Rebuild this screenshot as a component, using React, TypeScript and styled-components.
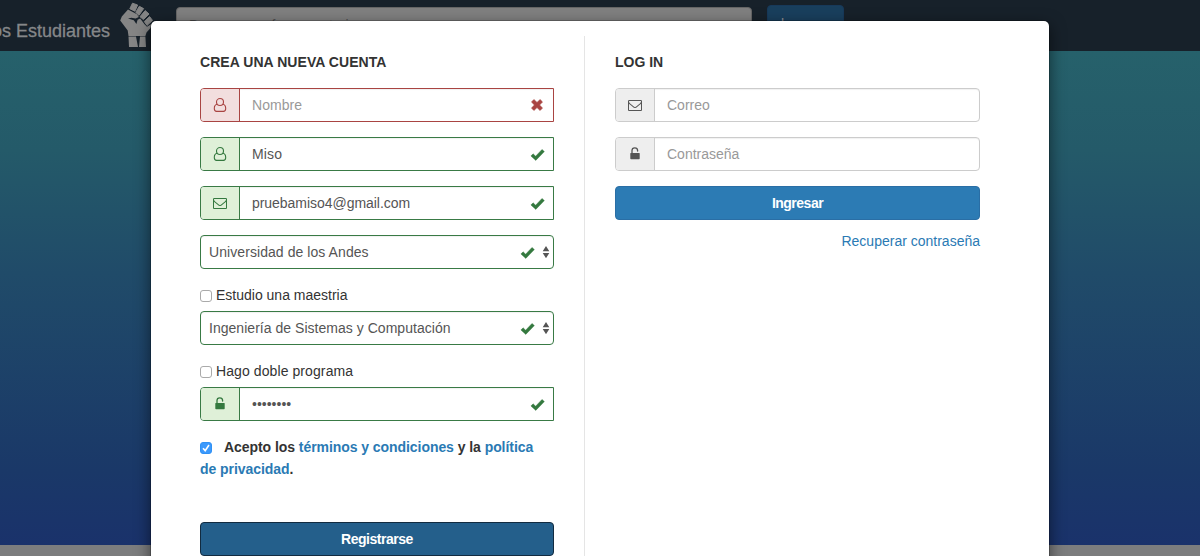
import React from 'react';
import styled, { createGlobalStyle } from 'styled-components';

const GlobalStyle = createGlobalStyle`
  * { box-sizing: border-box; }
  body {
    margin: 0;
    overflow: hidden;
    font-family: 'Liberation Sans', Helvetica, Arial, sans-serif;
    font-size: 14px;
    line-height: 20px;
    color: #333;
  }
`;

type Tone = 'error' | 'success' | 'plain';
const tones: Record<Tone, { line: string; fill: string; ink: string }> = {
  error: { line: '#a94442', fill: '#f2dede', ink: '#a94442' },
  success: { line: '#397a45', fill: '#dff0d8', ink: '#34793f' },
  plain: { line: '#ccc', fill: '#eee', ink: '#555' },
};

const Page = styled.div`
  position: relative;
  height: 556px;
  display: flex;
  flex-direction: column;
  overflow: hidden;
`;
const Navbar = styled.header`
  height: 51px;
  flex: none;
  display: flex;
  align-items: flex-start;
  background: #17212a;
`;
const Brand = styled.div`
  width: 110px;
  height: 51px;
  padding-top: 20px;
  display: flex;
  justify-content: flex-end;
  white-space: nowrap;
  font-size: 18px;
  line-height: 22px;
  color: #858789;
  -webkit-text-stroke: 0.3px #858789;
`;
const Fist = styled.svg`
  width: 34px;
  height: 46px;
  margin: 2px 0 0 9px;
`;
const Search = styled.div`
  width: 576px;
  height: 34px;
  margin: 7px 0 0 23px;
  padding: 7px 12px;
  border: 1px solid #666;
  border-radius: 4px;
  background: #808080;
  color: #505050;
`;
const SearchButton = styled.div`
  width: 77px;
  height: 34px;
  margin: 5px 0 0 15px;
  padding: 8px 13px;
  border-radius: 4px;
  border: 1px solid #17395a;
  background: #193f5d;
  color: #909090;
`;
const Hero = styled.main`
  flex: 1;
  background: linear-gradient(#26616b, #245a69 20%, #204b69 45%, #1a3868 85%, #1a326b);
`;
const Footer = styled.footer`
  height: 11px;
  flex: none;
  background: #7c7d7e;
`;
const Modal = styled.section`
  position: absolute;
  top: 20px;
  left: 150px;
  width: 900px;
  height: 700px;
  padding: 15px 49px 0;
  display: flex;
  background: #fff;
  background-clip: padding-box;
  border: 1px solid rgba(0, 0, 0, 0.2);
  border-radius: 6px;
  box-shadow: 0 5px 15px rgba(0, 0, 0, 0.5);
`;
const SignUp = styled.div`
  width: 385px;
  padding-right: 30px;
  border-right: 1px solid #e5e5e5;
`;
const LogIn = styled.div`
  width: 395px;
  padding-left: 30px;
`;
const Title = styled.h4`
  margin: 16px 0;
  font-size: 14px;
  line-height: 20px;
  white-space: nowrap;
`;
const Field = styled.div<{ $tone: Tone; $flat?: boolean }>`
  height: 34px;
  margin-bottom: 15px;
  display: flex;
  border: 1px solid ${(p) => tones[p.$tone].line};
  border-radius: ${(p) => (p.$flat ? '4px 0 0 4px' : '4px')};
  box-shadow: inset 0 1px 1px rgba(0, 0, 0, 0.06);
  color: ${(p) => tones[p.$tone].ink};
  overflow: hidden;
`;
const Addon = styled.div<{ $tone: Tone }>`
  width: 39px;
  display: flex;
  align-items: center;
  justify-content: center;
  border-right: 1px solid ${(p) => tones[p.$tone].line};
  background: ${(p) => tones[p.$tone].fill};
`;
const Value = styled.div<{ $hint?: boolean }>`
  flex: 1;
  padding: 6px 12px;
  color: ${(p) => (p.$hint ? '#999' : '#555')};
`;
const Status = styled.div`
  width: 32px;
  display: flex;
  align-items: center;
  justify-content: center;
`;
const Select = styled(Field)`
  margin-bottom: 16px;
  ${Value} { padding-left: 8px; }
  ${Status} { width: 29px; }
`;
const Arrows = styled.svg`
  width: 8px;
  height: 12px;
  margin: 10px 3px 0 0;
`;
const CheckRow = styled.div`
  height: 20px;
  margin-bottom: 6px;
  display: flex;
  align-items: center;
  gap: 4px;
`;
const Box = styled.span<{ $on?: boolean }>`
  width: 12px;
  height: 12px;
  flex: none;
  display: inline-flex;
  margin-top: 2px;
  border: 1px solid ${(p) => (p.$on ? '#2f91f5' : '#aaa')};
  border-radius: 3px;
  background: ${(p) => (p.$on ? '#3b99fc' : '#fff')};
  svg { width: 10px; height: 10px; }
`;
const Terms = styled.p`
  margin: 0 0 42px;
  font-weight: bold;
  line-height: 22px;
  ${Box} { margin: 0 12px 0 0; vertical-align: -1px; }
`;
const Link = styled.a`
  color: #2a7ab4;
`;
const Button = styled.div<{ $dark?: boolean }>`
  height: 34px;
  display: flex;
  align-items: center;
  justify-content: center;
  border: 1px solid ${(p) => (p.$dark ? '#122b40' : '#2a6ea5')};
  border-radius: 4px;
  background: ${(p) => (p.$dark ? '#245f8b' : '#2c7bb4')};
  color: #fff;
  font-weight: bold;
`;
const Recover = styled.div`
  margin-top: 11px;
  text-align: right;
`;
const Tracked = styled.span<{ $by: number }>`
  letter-spacing: ${(p) => p.$by}px;
`;

const UserIcon = () => (
  <svg width="14" height="16" viewBox="0 0 14 16" fill="none" stroke="currentColor" strokeWidth="1.1">
    <circle cx="7" cy="5" r="3.5" />
    <path d="M4.3 7.3C2.2 7.6 1.3 9.1 1.3 11.5c0 1.8.8 2.9 2.3 2.9h6.8c1.5 0 2.3-1.1 2.3-2.9 0-2.4-.9-3.9-3-4.2" />
  </svg>
);
const MailIcon = () => (
  <svg width="14" height="14" viewBox="0 0 1792 1792" fill="currentColor">
    <path d="M1664 1504v-768q-32 36-69 66-268 206-426 338-51 43-83 67t-86.5 48.5-102.5 24.5h-2q-48 0-102.5-24.5t-86.5-48.5-83-67q-158-132-426-338-37-30-69-66v768q0 13 9.5 22.5t22.5 9.5h1472q13 0 22.5-9.5t9.5-22.5zm0-1051v-24.5l-.5-13-3-12.5-5.5-9-9-7.5-14-2.5h-1472q-13 0-22.5 9.5t-9.5 22.5q0 168 147 284 193 152 401 317 6 5 35 29.5t46 37.5 44.5 31.5 50.5 27.5 43 9h2q20 0 43-9t50.5-27.5 44.5-31.5 46-37.5 35-29.5q208-165 401-317 54-43 100.5-115.5t46.5-131.5zm128-37v1088q0 66-47 113t-113 47h-1472q-66 0-113-47t-47-113v-1088q0-66 47-113t113-47h1472q66 0 113 47t47 113z" />
  </svg>
);
const LockIcon = () => (
  <svg width="10" height="14" viewBox="0 0 10 14">
    <path d="M2 6.5V3.6a2.8 2.8 0 0 1 5.6 0v.5" fill="none" stroke="currentColor" strokeWidth="1.3" strokeLinecap="round" />
    <rect x="0.3" y="5.9" width="9.4" height="6.3" rx="0.7" fill="currentColor" />
  </svg>
);
const CheckIcon = () => (
  <svg width="15" height="13" viewBox="0 0 15 13">
    <path d="M.9 8 3.1 5.8 5.6 8.2 12 1.4 14.4 3.6 5.8 12.4Z" fill="currentColor" stroke="currentColor" strokeWidth=".4" strokeLinejoin="round" />
  </svg>
);
const CrossIcon = () => (
  <svg width="12" height="12" viewBox="0 0 12 12">
    <path d="M2.9.5 6 3.4 9.1.5l2.4 2.4L8.6 6l2.9 3.1-2.4 2.4L6 8.6l-3.1 2.9L.5 9.1 3.4 6 .5 2.9Z" fill="currentColor" stroke="currentColor" strokeWidth=".6" strokeLinejoin="round" />
  </svg>
);
const SelectArrows = () => (
  <Arrows viewBox="0 0 8 12" fill="#555">
    <path d="M4 0 7.3 5.2H.7ZM4 12.2 .7 7h6.6Z" />
  </Arrows>
);
const FistLogo = () => (
  <Fist viewBox="0 0 34 46" fill="#858585">
    <path d="M13.5 1.2 18.6 3 15.9 9.2 10.8 6.7Z" stroke="#858585" strokeLinejoin="round" />
    <path d="M20.3 4.3 24.6 6.6 20 13.3 16.7 10.4Z" stroke="#858585" strokeLinejoin="round" />
    <path d="M26.2 8.6 30 12 24.4 17.6 21 14.7Z" stroke="#858585" strokeLinejoin="round" />
    <path d="M30.6 14.6 33.5 18.4 28 23.4 25.3 19.5Z" stroke="#858585" strokeLinejoin="round" />
    <path d="M9 7.5 18 12.2 19.8 15 16.6 16.6 12.4 15.8 9 16.4 14.8 18.3 17.4 22 18.6 17.8 21.2 16.4 25.5 22.2 28 24.8 32.5 22 31.5 26 27.5 30.5 26.4 34H9.5L8.7 28.5 1.2 18.5 2.8 14.5Z" />
    <path d="M9.5 34.5H17l2 10.5h-9ZM21 34.5h5.4L27 45h-7Z" />
  </Fist>
);

interface InputProps {
  tone: Tone;
  icon: React.ReactNode;
  text: string;
  hint?: boolean;
  tracking?: number;
}
const Input = ({ tone, icon, text, hint, tracking = 0 }: InputProps) => (
  <Field $tone={tone} $flat={tone !== 'plain'}>
    <Addon $tone={tone}>{icon}</Addon>
    <Value $hint={hint}><Tracked $by={tracking}>{text}</Tracked></Value>
    {tone !== 'plain' && <Status>{tone === 'error' ? <CrossIcon /> : <CheckIcon />}</Status>}
  </Field>
);
const Picker = ({ text, tracking = 0 }: { text: string; tracking?: number }) => (
  <Select $tone="success">
    <Value><Tracked $by={tracking}>{text}</Tracked></Value>
    <Status><CheckIcon /></Status>
    <SelectArrows />
  </Select>
);

export default function App() {
  return (
    <>
      <GlobalStyle />
      <Page>
        <Navbar>
          <Brand>Los Estudiantes</Brand>
          <FistLogo />
          <Search>Busca un profesor, materia o</Search>
          <SearchButton>buscar</SearchButton>
        </Navbar>
        <Hero />
        <Footer />
        <Modal>
          <SignUp>
            <Title><Tracked $by={0.05}>CREA UNA NUEVA CUENTA</Tracked></Title>
            <Input tone="error" icon={<UserIcon />} text="Nombre" hint tracking={0.05} />
            <Input tone="success" icon={<UserIcon />} text="Miso" tracking={0.15} />
            <Input tone="success" icon={<MailIcon />} text="pruebamiso4@gmail.com" tracking={-0.04} />
            <Picker text="Universidad de los Andes" tracking={0.07} />
            <CheckRow><Box />Estudio una maestria</CheckRow>
            <Picker text="Ingeniería de Sistemas y Computación" tracking={0.03} />
            <CheckRow><Box /><Tracked $by={0.09}>Hago doble programa</Tracked></CheckRow>
            <Input tone="success" icon={<LockIcon />} text="••••••••" />
            <Terms>
              <Box $on>
                <svg viewBox="0 0 10 10" fill="none" stroke="#fff" strokeWidth="1.6"><path d="M2 5.2 4.2 7.6 8 2" /></svg>
              </Box>
              <Tracked $by={-0.06}>Acepto los <Link>términos y condiciones</Link> y la <Link>política<br />de privacidad</Link>.</Tracked>
            </Terms>
            <Button $dark><Tracked $by={-0.48}>Registrarse</Tracked></Button>
          </SignUp>
          <LogIn>
            <Title>LOG IN</Title>
            <Input tone="plain" icon={<MailIcon />} text="Correo" hint />
            <Input tone="plain" icon={<LockIcon />} text="Contraseña" hint />
            <Button><Tracked $by={-0.5}>Ingresar</Tracked></Button>
            <Recover><Link>Recuperar contraseña</Link></Recover>
          </LogIn>
        </Modal>
      </Page>
    </>
  );
}
